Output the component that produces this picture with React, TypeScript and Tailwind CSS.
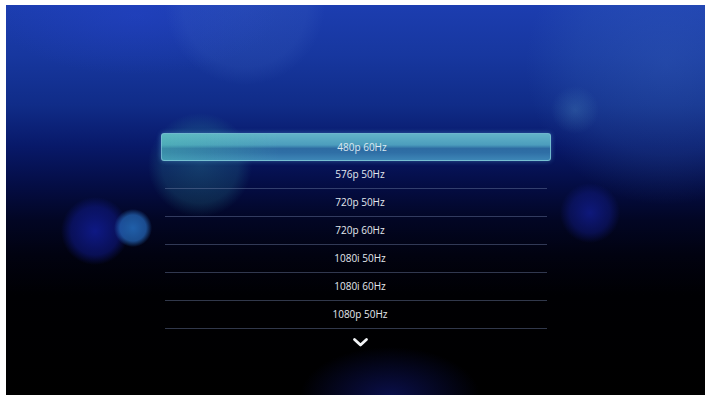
const modes = [
  "480p 60Hz",
  "576p 50Hz",
  "720p 50Hz",
  "720p 60Hz",
  "1080i 50Hz",
  "1080i 60Hz",
  "1080p 50Hz",
];

function ChevronDown() {
  return (
    <svg width="17" height="11" viewBox="0 0 17 11" fill="none">
      <path
        d="M2.5 2.5 L8.5 8 L14.5 2.5"
        stroke="#f2f4f6"
        strokeWidth="2.8"
        strokeLinecap="round"
        strokeLinejoin="round"
      />
    </svg>
  );
}

export default function App() {
  return (
    <div className="w-[710px] h-[403px] bg-white pt-[5px] pl-[6px] pr-[5px] pb-[8px] font-['Open_Sans','Noto_Sans',sans-serif]">
      <div className="w-full h-full overflow-hidden bg-[linear-gradient(to_bottom,#1c3db0_0px,#17379f_50px,#102c88_100px,#08196a_140px,#040d45_180px,#020624_215px,#010210_250px,#000003_290px,#000000_100%)]">
        <div className="w-full h-full flex flex-col bg-[radial-gradient(circle_at_127px_223px,rgba(35,105,185,0.9)_0px,rgba(35,100,180,0.75)_13px,rgba(30,80,170,0)_19px),radial-gradient(circle_at_89px_226px,rgba(16,28,150,0.85)_0px,rgba(14,24,130,0.6)_24px,rgba(10,20,110,0)_34px),radial-gradient(circle_at_584px_208px,rgba(18,30,150,0.75)_0px,rgba(16,26,130,0.5)_20px,rgba(10,20,110,0)_30px),radial-gradient(circle_at_194px_160px,rgba(50,150,160,0.32)_0px,rgba(45,140,155,0.22)_38px,rgba(40,120,150,0)_52px),radial-gradient(circle_at_239px_0px,rgba(70,110,200,0.22)_0px,rgba(70,110,200,0.16)_62px,rgba(60,100,190,0)_80px),radial-gradient(circle_at_569px_105px,rgba(90,160,200,0.25)_0px,rgba(80,150,190,0)_24px),radial-gradient(circle_at_660px_60px,rgba(70,120,200,0.28)_0px,rgba(60,110,190,0.18)_90px,rgba(50,100,180,0)_140px),radial-gradient(ellipse_90px_50px_at_384px_392px,rgba(20,30,150,0.5)_0px,rgba(15,25,120,0)_100%),radial-gradient(ellipse_140px_60px_at_130px_10px,rgba(40,70,210,0.35)_0px,rgba(40,70,210,0)_100%)]">
          <div className="ml-[155px] mt-[128px] w-[390px] flex flex-col">
            {modes.map((mode, i) =>
              i === 0 ? (
                <div
                  key={mode}
                  className="h-[28px] w-full rounded-[3px] border border-[#7cc2d4]/80 shadow-[0_0_5px_rgba(90,170,220,0.45)] bg-[linear-gradient(to_right,rgba(80,200,175,0.35)_0%,rgba(80,200,175,0.15)_18%,rgba(80,200,175,0)_30%),linear-gradient(to_bottom,#62b3c8_0%,#4c9dbd_42%,#2d6ba2_56%,#2f6fa6_72%,#3d86b6_100%)] flex items-center justify-center pl-[12px] text-[10px] text-[#dce8f0]"
                >
                  {mode}
                </div>
              ) : (
                <div
                  key={mode}
                  className="h-[28px] mx-[4px] border-b border-[#6c7ca4]/45 flex items-center justify-center pl-[8px] pb-[1px] text-[10px] text-[#e4e8ee]"
                >
                  {mode}
                </div>
              )
            )}
            <div className="flex justify-center pl-[8px] mt-[8px]">
              <ChevronDown />
            </div>
          </div>
        </div>
      </div>
    </div>
  );
}
